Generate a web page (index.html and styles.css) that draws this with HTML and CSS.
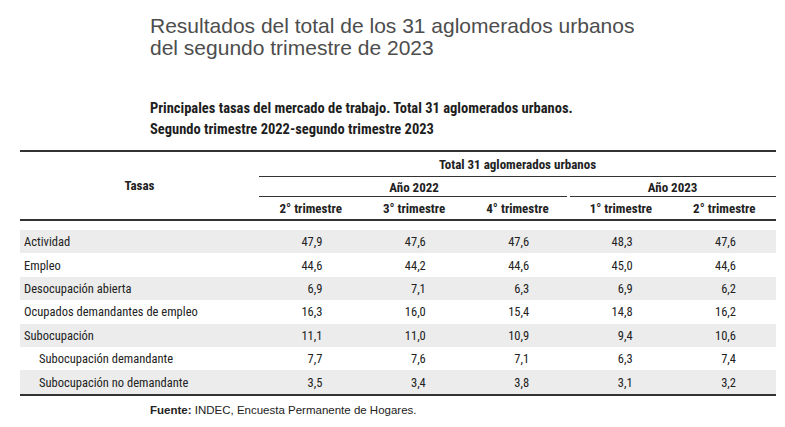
FILE: index.html
```html
<!DOCTYPE html>
<html lang="es">
<head>
<meta charset="utf-8">
<title>Resultados EPH</title>
<link rel="stylesheet" href="styles.css">
</head>
<body>
<h1 class="title">Resultados del total de los 31 aglomerados urbanos<br>del segundo trimestre de 2023</h1>
<h2 class="subtitle">Principales tasas del mercado de trabajo. Total 31 aglomerados urbanos.<br>Segundo trimestre 2022-segundo trimestre 2023</h2>
<table class="data">
  <colgroup>
    <col class="c-label">
    <col class="c-num"><col class="c-num"><col class="c-num"><col class="c-num"><col class="c-num">
  </colgroup>
  <thead>
    <tr class="h1">
      <th rowspan="3" class="tasas">Tasas</th>
      <th colspan="5" class="total">Total 31 aglomerados urbanos</th>
    </tr>
    <tr class="h2">
      <th colspan="3" class="yr yr-a">Año 2022</th>
      <th colspan="2" class="yr yr-b">Año 2023</th>
    </tr>
    <tr class="h3">
      <th>2° trimestre</th>
      <th>3° trimestre</th>
      <th>4° trimestre</th>
      <th>1° trimestre</th>
      <th>2° trimestre</th>
    </tr>
  </thead>
  <tbody>
    <tr class="gap"><td colspan="6"></td></tr>
    <tr class="shade"><td class="lbl">Actividad</td><td>47,9</td><td>47,6</td><td>47,6</td><td>48,3</td><td>47,6</td></tr>
    <tr><td class="lbl">Empleo</td><td>44,6</td><td>44,2</td><td>44,6</td><td>45,0</td><td>44,6</td></tr>
    <tr class="shade"><td class="lbl">Desocupación abierta</td><td>6,9</td><td>7,1</td><td>6,3</td><td>6,9</td><td>6,2</td></tr>
    <tr><td class="lbl">Ocupados demandantes de empleo</td><td>16,3</td><td>16,0</td><td>15,4</td><td>14,8</td><td>16,2</td></tr>
    <tr class="shade"><td class="lbl">Subocupación</td><td>11,1</td><td>11,0</td><td>10,9</td><td>9,4</td><td>10,6</td></tr>
    <tr><td class="lbl sub">Subocupación demandante</td><td>7,7</td><td>7,6</td><td>7,1</td><td>6,3</td><td>7,4</td></tr>
    <tr class="shade last"><td class="lbl sub">Subocupación no demandante</td><td>3,5</td><td>3,4</td><td>3,8</td><td>3,1</td><td>3,2</td></tr>
  </tbody>
</table>
<p class="source"><b>Fuente:</b> INDEC, Encuesta Permanente de Hogares.</p>
</body>
</html>
```

FILE: styles.css
```css
html, body {
  margin: 0;
  padding: 0;
  background: #fff;
}
body {
  width: 785px;
  height: 427px;
  overflow: hidden;
  font-family: "Liberation Sans", Arial, sans-serif;
}
.title {
  margin: 15px 0 0 150px;
  font-size: 21px;
  line-height: 21.5px;
  font-weight: normal;
  color: #4d4d4d;
}
.subtitle {
  margin: 40px 0 0 150px;
  font-family: Roboto, "Liberation Sans", sans-serif;
  font-stretch: 75%;
  font-size: 14.5px;
  line-height: 21px;
  font-weight: bold;
  color: #1e1e1e;
}
.data {
  margin: 10px 0 0 20px;
  width: 756px;
  border-collapse: separate;
  border-spacing: 0;
  table-layout: fixed;
  font-family: Roboto, "Liberation Sans", sans-serif;
  font-stretch: 75%;
  font-size: 13px;
  color: #222;
  border-top: 2px solid #333;
  border-bottom: 2px solid #333;
}
.c-label { width: 239px; }
.c-num { width: 103.4px; }
.data th {
  font-weight: bold;
  text-align: center;
  padding: 0;
}
.h1 th.total {
  height: 24px;
  border-bottom: 1px solid #333;
}
.h2 th {
  height: 20px;
}
.yr-a {
  background: linear-gradient(#333, #333) left bottom / calc(100% - 2px) 1px no-repeat;
}
.yr-b {
  background: linear-gradient(#333, #333) right bottom / calc(100% - 1px) 1px no-repeat;
}
.h3 th {
  height: 21px;
  border-bottom: 2px solid #333;
  border-top: 1px solid transparent;
}
.tasas {
  border-bottom: 2px solid #333;
}
.data tbody td {
  height: 23.4px;
  padding: 0 40px 0 0;
  text-align: right;
  font-size: 12.5px;
}
.data tbody tr.gap td {
  height: 9px;
  padding: 0;
}
.data tbody td.lbl {
  text-align: left;
  padding: 0 0 0 4px;
}
.data tbody td.sub {
  padding-left: 19px;
}
.shade td {
  background: #ececec;
}
.source {
  margin: 8px 0 0 150px;
  font-size: 11.5px;
  color: #222;
}
```
